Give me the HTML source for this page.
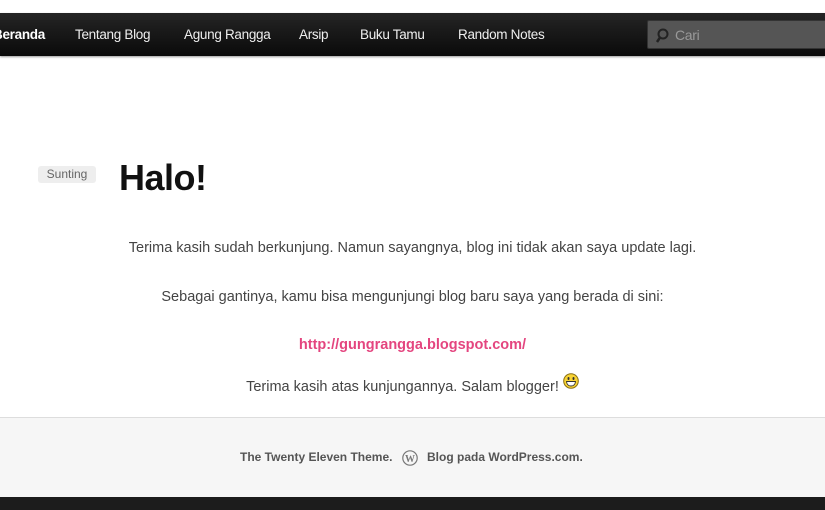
<!DOCTYPE html>
<html><head><meta charset="utf-8"><style>
*{margin:0;padding:0;box-sizing:border-box}
body{width:825px;height:510px;overflow:hidden;background:#fff;font-family:"Liberation Sans",sans-serif;position:relative}
.nav{position:absolute;left:0;top:13px;width:825px;height:43px;background:linear-gradient(#252525,#0a0a0a);box-shadow:0 1px 2px rgba(0,0,0,.4)}
.nav span{position:absolute;top:14px;color:#eee;font-size:13.5px;letter-spacing:-0.3px}
.search{position:absolute;left:647px;top:7px;width:190px;height:29px;background:#555;border:1px solid #333;border-radius:2px}
.search span{position:absolute;left:27px;top:6px;color:#999;font-size:14px}
.sunt{position:absolute;left:38px;top:166px;width:58px;height:17px;background:#eee;border-radius:3px;color:#666;font-size:12px;text-align:center;line-height:17px}
h1{position:absolute;left:119px;top:157px;font-size:36px;font-weight:bold;color:#111;letter-spacing:-0.5px}
p{position:absolute;left:0;width:825px;text-align:center;font-size:14.5px;color:#444}
.foot{position:absolute;left:0;top:417px;width:825px;height:80px;background:#f6f6f6;border-top:1px solid #ddd}
.foot div{position:absolute;top:32px;font-size:12px;font-weight:bold;color:#555}
.bottom{position:absolute;left:0;top:497px;width:825px;height:13px;background:#1c1c1c}
</style></head><body>
<div class="nav">
<span style="left:-7px;font-weight:bold;color:#fff">Beranda</span>
<span style="left:75px">Tentang Blog</span>
<span style="left:184px">Agung Rangga</span>
<span style="left:299px">Arsip</span>
<span style="left:360px">Buku Tamu</span>
<span style="left:458px">Random Notes</span>
<div class="search"><svg style="position:absolute;left:7px;top:7px" width="14" height="16" viewBox="0 0 14 16"><circle cx="8" cy="6" r="4.5" fill="none" stroke="#222" stroke-width="2"/><line x1="5" y1="9.5" x2="2" y2="14" stroke="#222" stroke-width="2.5"/></svg><span>Cari</span></div>
</div>
<div class="sunt">Sunting</div>
<h1>Halo!</h1>
<p style="top:240px">Terima kasih sudah berkunjung. Namun sayangnya, blog ini tidak akan saya update lagi.</p>
<p style="top:289px">Sebagai gantinya, kamu bisa mengunjungi blog baru saya yang berada di sini:</p>
<p style="top:337px;color:#e4457f;font-weight:bold">http://gungrangga.blogspot.com/</p>
<p style="top:373px">Terima kasih atas kunjungannya. Salam blogger! <svg width="16" height="16" viewBox="0 0 16 16" style="vertical-align:2px"><circle cx="8" cy="8" r="7.3" fill="#f8d334" stroke="#8a6f10" stroke-width="1"/><ellipse cx="5.5" cy="5.5" rx="1" ry="1.5" fill="#333"/><ellipse cx="10.5" cy="5.5" rx="1" ry="1.5" fill="#333"/><path d="M3.5 8.5 H12.5 Q12 13 8 13 Q4 13 3.5 8.5Z" fill="#fff" stroke="#333" stroke-width="0.9"/></svg></p>
<div class="foot">
<div style="left:240px">The Twenty Eleven Theme.</div>
<svg style="position:absolute;left:402px;top:32px" width="16" height="16" viewBox="0 0 16 16"><circle cx="8" cy="8" r="7.2" fill="none" stroke="#777" stroke-width="1.2"/><text x="8" y="12" font-size="10" font-family="Liberation Serif" font-weight="bold" fill="#777" text-anchor="middle">W</text></svg>
<div style="left:427px">Blog pada WordPress.com.</div>
</div>
<div class="bottom"></div>
</body></html>
